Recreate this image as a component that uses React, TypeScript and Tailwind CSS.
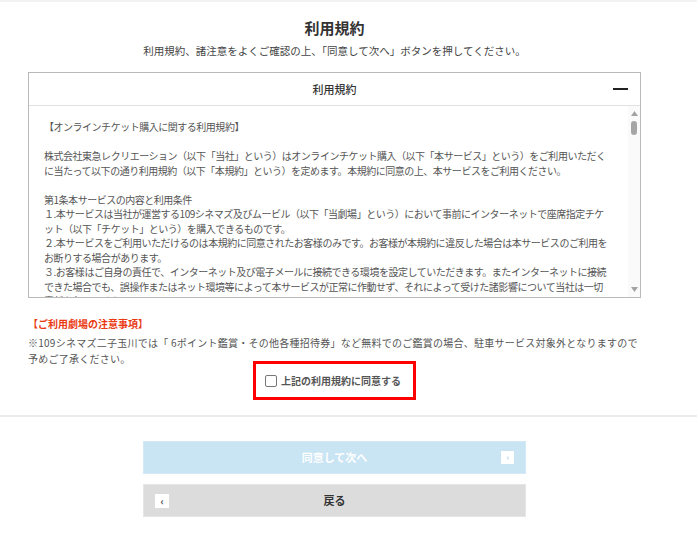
import React, { useState } from 'react';

const jp = { fontFamily: '"Noto Sans CJK JP", "Noto Sans", sans-serif' };

const terms: string[][] = [
  ['【オンラインチケット購入に関する利用規約】'],
  [
    '株式会社東急レクリエーション（以下「当社」という）はオンラインチケット購入（以下「本サービス」という）をご利用いただく',
    'に当たって以下の通り利用規約（以下「本規約」という）を定めます。本規約に同意の上、本サービスをご利用ください。',
  ],
  [
    '第1条本サービスの内容と利用条件',
    '１.本サービスは当社が運営する109シネマズ及びムービル（以下「当劇場」という）において事前にインターネットで座席指定チケ',
    'ット（以下「チケット」という）を購入できるものです。',
    '２.本サービスをご利用いただけるのは本規約に同意されたお客様のみです。お客様が本規約に違反した場合は本サービスのご利用を',
    'お断りする場合があります。',
    '３.お客様はご自身の責任で、インターネット及び電子メールに接続できる環境を設定していただきます。またインターネットに接続',
    'できた場合でも、誤操作またはネット環境等によって本サービスが正常に作動せず、それによって受けた諸影響について当社は一切',
    '責任を負いません。',
  ],
];

function Scrollbar() {
  return (
    <div className="flex w-[12px] shrink-0 flex-col items-center bg-[#fafafa] py-[3px]">
      <svg width="7" height="5" viewBox="0 0 7 5" className="mt-[2px]">
        <path d="M3.5 0 L7 5 L0 5 Z" fill="#a3a3a3" />
      </svg>
      <div className="mt-[5px] h-[14px] w-[6px] rounded-full bg-[#a5a5a5]" />
      <div className="flex-1" />
      <svg width="7" height="5" viewBox="0 0 7 5" className="mb-[2px]">
        <path d="M0 0 L7 0 L3.5 5 Z" fill="#a3a3a3" />
      </svg>
    </div>
  );
}

export default function App() {
  const [agreed, setAgreed] = useState(false);
  const [open, setOpen] = useState(true);

  return (
    <div className="min-h-[540px] w-[697px] border-t-2 border-[#f3f3f3] bg-white" style={jp}>
      <div className="ml-[28px] w-[613px]">
        <h1 className="pt-[16px] text-center text-[15px] font-bold leading-[20px] text-[#333]">利用規約</h1>
        <p className="mt-[5px] text-center text-[10.5px] leading-[16px] text-[#444]">
          利用規約、諸注意をよくご確認の上、「同意して次へ」ボタンを押してください。
        </p>

        <div className="mt-[13px] border border-[#b9b9b9]">
          <button
            onClick={() => setOpen(!open)}
            className="relative flex h-[33px] w-full items-center justify-center border-b border-[#e2e2e2]"
          >
            <span className="text-[11px] font-medium text-[#333]">利用規約</span>
            <span className="absolute right-[12px] top-[15px] h-[2px] w-[15px] bg-[#222]" />
          </button>
          {open && (
            <div className="flex h-[191px]">
              <div className="flex-1 overflow-hidden pl-[15px] pt-[14px] text-[10px] leading-[14.5px] tracking-[-0.48px] text-[#555]">
                {terms.map((para, i) => (
                  <div key={i} className={i > 0 ? 'mt-[14.5px]' : ''}>
                    {para.map((line, j) => (
                      <div key={j} className="whitespace-nowrap">{line}</div>
                    ))}
                  </div>
                ))}
              </div>
              <Scrollbar />
            </div>
          )}
        </div>

        <h2 className="mt-[18px] text-[10px] font-bold leading-[16px] text-[#ea3a12]">【ご利用劇場の注意事項】</h2>
        <p className="mt-[3px] text-[10px] leading-[16px] tracking-[0.25px] text-[#555]">
          ※109シネマズ二子玉川では「 6ポイント鑑賞・その他各種招待券」など無料でのご鑑賞の場合、駐車サービス対象外となりますので
          <br />
          予めご了承ください。
        </p>

        <div className="-mt-[6px] flex justify-center">
          <label className="flex h-[39px] w-[163px] cursor-pointer items-center gap-[4px] border-[3px] border-[#ff0000] pl-[9px]">
            <input
              type="checkbox"
              checked={agreed}
              onChange={e => setAgreed(e.target.checked)}
              className="h-[12px] w-[12px] appearance-none rounded-[2px] border border-[#777] bg-white checked:bg-[#3b82f6]"
            />
            <span className="text-[10px] font-bold text-[#555]">上記の利用規約に同意する</span>
          </label>
        </div>
      </div>

      <div className="mt-[15px] h-[2px] w-full bg-[#ececec]" />

      <div className="ml-[28px] flex w-[613px] flex-col items-center gap-[10px] pt-[24px]">
        <button
          disabled={!agreed}
          className="relative flex h-[33px] w-[383px] items-center justify-center border border-[#d3e9f5] bg-[#c9e4f3]"
        >
          <span className="text-[11px] font-bold text-white">同意して次へ</span>
          <span className="absolute right-[11px] top-[9px] flex h-[13px] w-[13px] items-center justify-center bg-white text-[9px] leading-none text-[#9ccbe4]">
            ›
          </span>
        </button>
        <button className="relative flex h-[33px] w-[383px] items-center justify-center border border-[#e6e6e6] bg-[#dcdcdc]">
          <span className="absolute left-[11px] top-[9px] flex h-[14px] w-[14px] items-center justify-center bg-white text-[10px] font-bold leading-none text-[#444]">
            ‹
          </span>
          <span className="text-[11px] font-bold text-[#333]">戻る</span>
        </button>
      </div>
    </div>
  );
}
